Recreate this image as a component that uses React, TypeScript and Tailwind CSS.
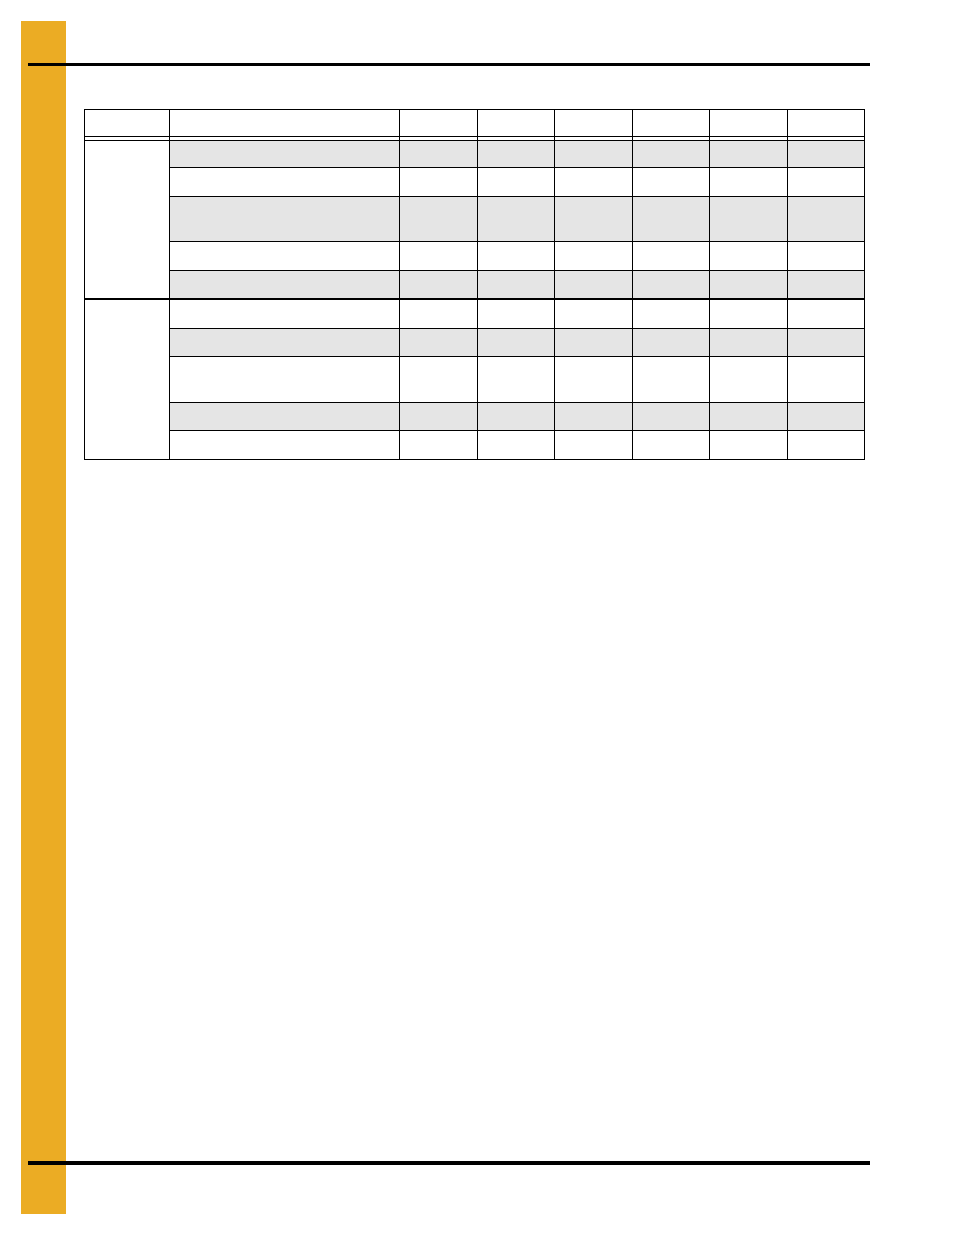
import React from 'react';

const cols = [85, 230, 78, 77, 78, 77, 78, 77];

// row heights per group, gray = shaded row
const groups = [
  [
    { h: 'h-[27px]', gray: true },
    { h: 'h-[29px]', gray: false },
    { h: 'h-[45px]', gray: true },
    { h: 'h-[29px]', gray: false },
    { h: 'h-[28px]', gray: true },
  ],
  [
    { h: 'h-[30px]', gray: false },
    { h: 'h-[28px]', gray: true },
    { h: 'h-[46px]', gray: false },
    { h: 'h-[28px]', gray: true },
    { h: 'h-[29px]', gray: false },
  ],
];

const cell = 'border border-black p-0';

export default function App() {
  return (
    <div className="relative w-[954px] h-[1235px] bg-white overflow-hidden" style={{ fontFamily: '"Liberation Sans", Arial, sans-serif' }}>
      {/* side tab */}
      <div className="absolute left-[21px] top-[21px] w-[45px] h-[1193px] bg-[#ebac24]" />

      <div className="relative flex flex-col h-full pt-[63px]">
        <div className="ml-[28px] w-[842px] h-[3px] bg-black" />

        <table className="mt-[43px] ml-[84px] w-[780px] table-fixed border-collapse">
          <colgroup>
            {cols.map((w, i) => (
              <col key={i} style={{ width: w }} />
            ))}
          </colgroup>
          <thead>
            <tr className="h-[27px]">
              {cols.map((_, i) => (
                <th key={i} className={cell} />
              ))}
            </tr>
            <tr className="h-[4px]">
              {cols.map((_, i) => (
                <th key={i} className={`${cell} h-[3px]`} />
              ))}
            </tr>
          </thead>
          <tbody>
            {groups.map((rows, g) =>
              rows.map((r, i) => (
                <tr key={`${g}-${i}`} className={r.h}>
                  {i === 0 && (
                    <td rowSpan={rows.length} className={`${cell} bg-white ${g > 0 ? 'border-t-2' : ''}`} />
                  )}
                  {cols.slice(1).map((_, c) => (
                    <td
                      key={c}
                      className={`${cell} ${r.gray ? 'bg-[#e5e5e5]' : 'bg-white'} ${g > 0 && i === 0 ? 'border-t-2' : ''}`}
                    />
                  ))}
                </tr>
              ))
            )}
          </tbody>
        </table>

        <div className="mt-auto mb-[70px] ml-[28px] w-[842px] h-[4px] bg-black" />
      </div>
    </div>
  );
}
